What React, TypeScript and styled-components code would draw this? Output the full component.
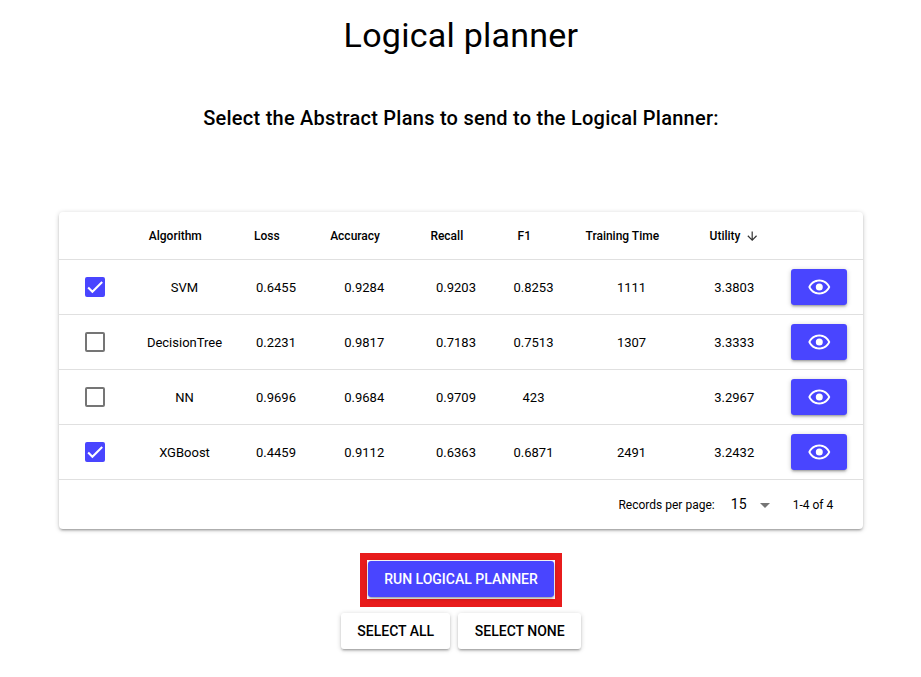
import React, { useState } from "react";
import styled, { createGlobalStyle } from "styled-components";

const GlobalStyle = createGlobalStyle`
  *, *::before, *::after { box-sizing: border-box; }
  body {
    margin: 0;
    background: #fff;
    color: #000;
    font-family: Roboto, "Liberation Sans", sans-serif;
    font-size: 14px;
    line-height: 1.5;
  }
  button { font-family: inherit; }
`;

const elevation = `0 1px 5px rgba(0, 0, 0, 0.2), 0 2px 2px rgba(0, 0, 0, 0.14), 0 3px 1px -2px rgba(0, 0, 0, 0.12)`;

const Page = styled.main`
  display: flex;
  flex-direction: column;
  align-items: center;
  width: 921px;
  height: 677px;
  padding: 15px 0 0 1px;
`;

const Title = styled.h1`
  margin: 0;
  font-size: 34px;
  font-weight: 400;
  line-height: 40px;
  letter-spacing: 0.00735em;
`;

const Subtitle = styled.h2`
  margin: 47px 0 78px;
  font-size: 20px;
  font-weight: 500;
  line-height: 32px;
  letter-spacing: 0.0125em;
`;

const Card = styled.section`
  width: 804px;
  height: 317px;
  border-radius: 4px;
  background: #fff;
  box-shadow: ${elevation};
`;

const Row = styled.div<{ $header?: boolean }>`
  display: grid;
  grid-template-columns: 71.5px 108px 75px 101.5px 82px 73px 123px 82.5px 87.5px;
  align-items: center;
  height: ${(p) => (p.$header ? 48 : 55)}px;
  border-bottom: 1px solid rgba(0, 0, 0, 0.12);
  font-size: ${(p) => (p.$header ? 12 : 13)}px;
  font-weight: ${(p) => (p.$header ? 500 : 400)};
`;

const Cell = styled.div`
  display: flex;
  align-items: center;
  justify-content: center;
  white-space: nowrap;
`;

const ValueCell = styled(Cell)`
  padding-top: 2px;
`;

const ActionCell = styled(Cell)`
  justify-content: flex-end;
  padding-right: 16px;
`;

const SortSlot = styled.span`
  display: flex;
  flex: none;
  width: 14.4px;
  height: 14.4px;
  margin: 2px 0 0 4px;
  color: #333;
`;

const Checkbox = styled.button<{ $checked: boolean }>`
  display: flex;
  width: 20px;
  height: 20px;
  padding: 0;
  border: 2px solid ${(p) => (p.$checked ? "#4945ff" : "#757575")};
  border-radius: 2px;
  background: ${(p) => (p.$checked ? "#4945ff" : "transparent")};
`;

const Button = styled.button<{ $primary?: boolean }>`
  display: flex;
  align-items: center;
  justify-content: center;
  height: 36px;
  min-width: 56px;
  padding: 0 ${(p) => (p.$primary ? 16 : 16.3)}px;
  border: 0;
  border-radius: 3px;
  background: ${(p) => (p.$primary ? "#4945ff" : "#fff")};
  color: ${(p) => (p.$primary ? "#fff" : "#000")};
  box-shadow: ${elevation};
  font-size: 14px;
  font-weight: 500;
  line-height: 24px;
  text-transform: uppercase;
  white-space: nowrap;
`;

const Footer = styled.div`
  display: flex;
  align-items: center;
  justify-content: flex-end;
  height: 49px;
  padding-right: 29.8px;
  font-size: 12px;
`;

const PageSize = styled.div`
  display: flex;
  align-items: center;
  margin: 0 16px;
  font-size: 14px;
  letter-spacing: 0.00937em;

  svg { margin-left: 6px; }
`;

const Highlight = styled.div`
  margin-top: 24px;
  padding: 1px 1.5px 2px;
  border: 7px solid #e81c1c;
  border-bottom-width: 8px;
`;

const Actions = styled.div`
  display: flex;
  gap: 8px;
  margin-top: 6px;
`;

const columns = ["Algorithm", "Loss", "Accuracy", "Recall", "F1", "Training Time", "Utility"];

const plans = [
  ["SVM", "0.6455", "0.9284", "0.9203", "0.8253", "1111", "3.3803"],
  ["DecisionTree", "0.2231", "0.9817", "0.7183", "0.7513", "1307", "3.3333"],
  ["NN", "0.9696", "0.9684", "0.9709", "423", "", "3.2967"],
  ["XGBoost", "0.4459", "0.9112", "0.6363", "0.6871", "2491", "3.2432"],
];

const CheckMark = () => (
  <svg width="16" height="16" viewBox="0 0 24 24" fill="none" stroke="#fff" strokeWidth="3.12">
    <path d="M1.73 12.91 8.1 19.28 22.79 4.59" />
  </svg>
);

const Eye = () => (
  <svg width="24" height="24" viewBox="-0.3 -0.5 24 24" fill="#fff">
    <path d="M12 6c3.79 0 7.17 2.13 8.82 5.5C19.17 14.87 15.79 17 12 17s-7.17-2.13-8.82-5.5C4.83 8.13 8.21 6 12 6m0-2C7 4 2.73 7.11 1 11.5 2.73 15.89 7 19 12 19s9.27-3.11 11-7.5C21.27 7.11 17 4 12 4z" />
    <circle cx="12" cy="11.5" r="3.5" />
  </svg>
);

const SortArrow = () => (
  <svg width="14.4" height="14.4" viewBox="0 0 24 24" fill="currentColor">
    <path d="M20 12l-1.41-1.41L13 16.17V4h-2v12.17l-5.58-5.59L4 12l8 8 8-8z" />
  </svg>
);

const DropDown = () => (
  <svg width="24" height="24" viewBox="0 0 24 24" fill="#757575">
    <path d="M7 10l5 5 5-5z" />
  </svg>
);

export default function App() {
  const [selected, setSelected] = useState<boolean[]>([true, false, false, true]);
  const toggle = (index: number) =>
    setSelected((current) => current.map((value, i) => (i === index ? !value : value)));

  return (
    <>
      <GlobalStyle />
      <Page>
        <Title>Logical planner</Title>
        <Subtitle>Select the Abstract Plans to send to the Logical Planner:</Subtitle>
        <Card>
          <Row $header>
            <Cell />
            {columns.map((name) => (
              <Cell key={name}>
                {name}
                <SortSlot>{name === "Utility" && <SortArrow />}</SortSlot>
              </Cell>
            ))}
            <Cell />
          </Row>
          {plans.map((plan, index) => (
            <Row key={plan[0]}>
              <Cell>
                <Checkbox
                  role="checkbox"
                  aria-checked={selected[index]}
                  aria-label={plan[0]}
                  $checked={selected[index]}
                  onClick={() => toggle(index)}
                >
                  {selected[index] && <CheckMark />}
                </Checkbox>
              </Cell>
              {plan.map((value, i) => (
                <ValueCell key={columns[i]}>{value}</ValueCell>
              ))}
              <ActionCell>
                <Button $primary aria-label="View plan">
                  <Eye />
                </Button>
              </ActionCell>
            </Row>
          ))}
          <Footer>
            Records per page:
            <PageSize>
              15
              <DropDown />
            </PageSize>
            1-4 of 4
          </Footer>
        </Card>
        <Highlight>
          <Button $primary>Run Logical Planner</Button>
        </Highlight>
        <Actions>
          <Button onClick={() => setSelected(plans.map(() => true))}>Select all</Button>
          <Button onClick={() => setSelected(plans.map(() => false))}>Select none</Button>
        </Actions>
      </Page>
    </>
  );
}
